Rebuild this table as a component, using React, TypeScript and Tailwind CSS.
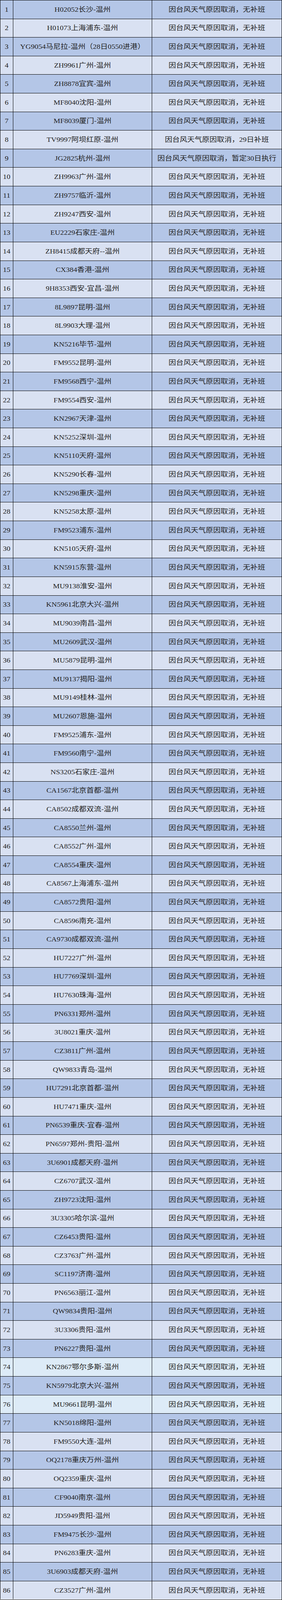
import React from "react";

const STD = "因台风天气原因取消，无补班";

const flights: string[] = [
  "H02052长沙-温州",
  "H01073上海浦东-温州",
  "YG9054马尼拉-温州（28日0550进港）",
  "ZH9961广州-温州",
  "ZH8878宜宾-温州",
  "MF8040沈阳-温州",
  "MF8039厦门-温州",
  "TV9997阿坝红原-温州",
  "JG2825杭州-温州",
  "ZH9963广州-温州",
  "ZH9757临沂-温州",
  "ZH9247西安-温州",
  "EU2229石家庄-温州",
  "ZH8415成都天府--温州",
  "CX384香港-温州",
  "9H8353西安-宜昌-温州",
  "8L9897昆明-温州",
  "8L9903大理-温州",
  "KN5216毕节-温州",
  "FM9552昆明-温州",
  "FM9568西宁-温州",
  "FM9554西安-温州",
  "KN2967天津-温州",
  "KN5252深圳-温州",
  "KN5110天府-温州",
  "KN5290长春-温州",
  "KN5298重庆-温州",
  "KN5258太原-温州",
  "FM9523浦东-温州",
  "KN5105天府-温州",
  "KN5915东营-温州",
  "MU9138淮安-温州",
  "KN5961北京大兴-温州",
  "MU9039南昌-温州",
  "MU2609武汉-温州",
  "MU5879昆明-温州",
  "MU9137揭阳-温州",
  "MU9149桂林-温州",
  "MU2607恩施-温州",
  "FM9525浦东-温州",
  "FM9560南宁-温州",
  "NS3205石家庄-温州",
  "CA1567北京首都-温州",
  "CA8502成都双流-温州",
  "CA8550兰州-温州",
  "CA8552广州-温州",
  "CA8554重庆-温州",
  "CA8567上海浦东-温州",
  "CA8572贵阳-温州",
  "CA8596南充-温州",
  "CA9730成都双流-温州",
  "HU7227广州-温州",
  "HU7769深圳-温州",
  "HU7630珠海-温州",
  "PN6331郑州-温州",
  "3U8021重庆-温州",
  "CZ3811广州-温州",
  "QW9833青岛-温州",
  "HU7291北京首都-温州",
  "HU7471重庆-温州",
  "PN6539重庆-宜春-温州",
  "PN6597郑州-贵阳-温州",
  "3U6901成都天府-温州",
  "CZ6707武汉-温州",
  "ZH9723沈阳-温州",
  "3U3305哈尔滨-温州",
  "CZ6453贵阳-温州",
  "CZ3763广州-温州",
  "SC1197济南-温州",
  "PN6563丽江-温州",
  "QW9834贵阳-温州",
  "3U3306贵阳-温州",
  "PN6227贵阳-温州",
  "KN2867鄂尔多斯-温州",
  "KN5979北京大兴-温州",
  "MU9661昆明-温州",
  "KN5018绵阳-温州",
  "FM9550大连-温州",
  "OQ2178重庆万州-温州",
  "OQ2359重庆-温州",
  "CF9040南京-温州",
  "JD5949贵阳-温州",
  "FM9475长沙-温州",
  "PN6283重庆-温州",
  "3U6903成都天府-温州",
  "CZ3527广州-温州",
];

const notes: Record<number, string> = {
  8: "因台风天气原因取消，29日补班",
  9: "因台风天气原因取消，暂定30日执行",
};

function rowBg(n: number): string {
  if (n === 74 || n === 76) return "bg-[#ddebf7]";
  return n % 2 === 1 ? "bg-[#b4c6e7]" : "bg-[#d9e1f2]";
}

function Txt({ children }: { children: React.ReactNode }) {
  return <span className="inline-block scale-y-[0.9] whitespace-nowrap">{children}</span>;
}

export default function App() {
  return (
    <div className="flex h-[4096px] w-[721px] flex-col border-r border-b border-black bg-white font-['Liberation_Serif','Noto_Sans_CJK_SC',serif] text-[19px] leading-none text-[#222222]">
      {flights.map((f, i) => {
        const n = i + 1;
        return (
          <div key={n} className={`flex min-h-0 flex-1 border-t border-black ${rowBg(n)}`}>
            <div className="flex w-[33px] shrink-0 items-center justify-center border-l border-black">
              <Txt>{n}</Txt>
            </div>
            <div className="flex w-[355px] shrink-0 items-center justify-center border-l border-black">
              <Txt>{f}</Txt>
            </div>
            <div className="flex flex-1 items-center justify-center border-l border-black">
              <Txt>{notes[n] ?? STD}</Txt>
            </div>
          </div>
        );
      })}
    </div>
  );
}
